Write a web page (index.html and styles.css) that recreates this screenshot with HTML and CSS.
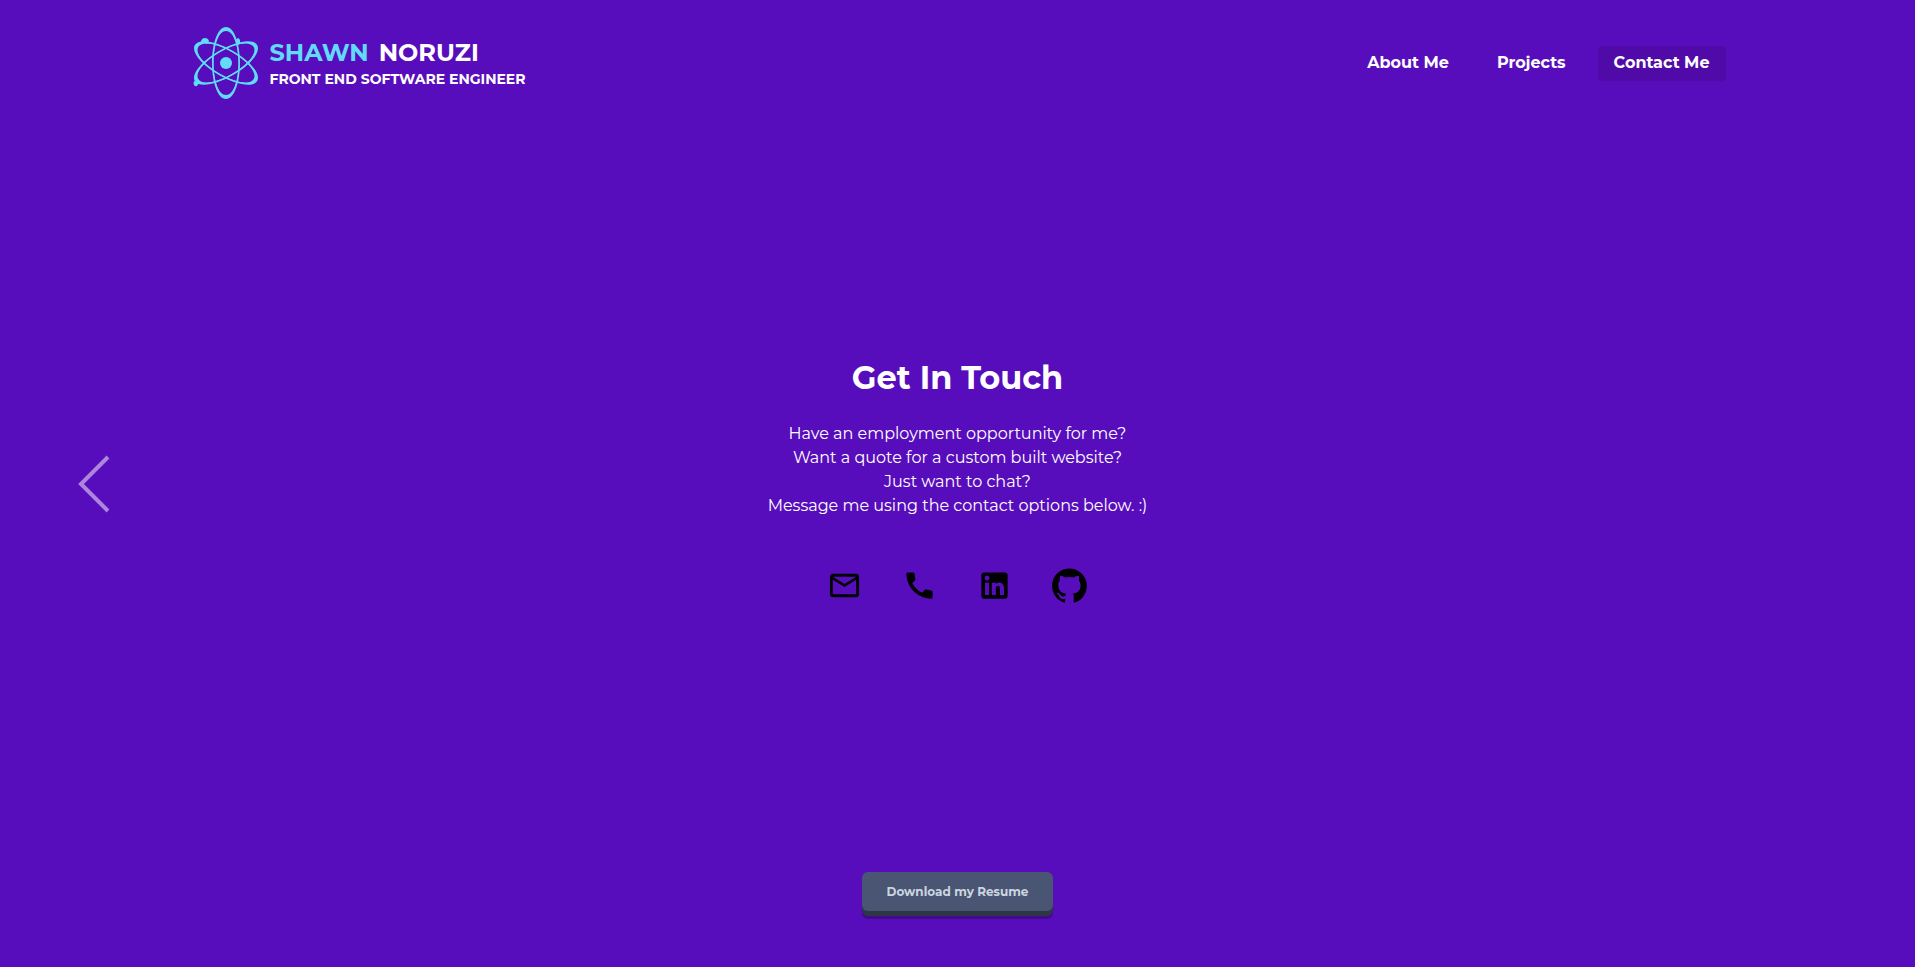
FILE: index.html
```html
<!DOCTYPE html>
<html lang="en">
<head>
<meta charset="utf-8">
<meta name="viewport" content="width=device-width, initial-scale=1">
<title>Shawn Noruzi | Contact</title>
<link rel="stylesheet" href="styles.css">
</head>
<body>
<header class="header">
  <a class="brand" href="#home">
    <svg class="brand-logo" viewBox="0 0 66 72" aria-hidden="true">
      <g fill="#61dafb" fill-rule="evenodd">
        <path d="M33 0C41 0 47 16 47 36S41 72 33 72S19 56 19 36S25 0 33 0ZM33 4C26 4 20.500 17 20.500 36S26 68 33 68S45.500 55 45.500 36S40 4 33 4Z"/>
        <path d="M33 0C41 0 47 16 47 36S41 72 33 72S19 56 19 36S25 0 33 0ZM33 4C26 4 20.500 17 20.500 36S26 68 33 68S45.500 55 45.500 36S40 4 33 4Z" transform="rotate(60 33 36)"/>
        <path d="M33 0C41 0 47 16 47 36S41 72 33 72S19 56 19 36S25 0 33 0ZM33 4C26 4 20.500 17 20.500 36S26 68 33 68S45.500 55 45.500 36S40 4 33 4Z" transform="rotate(-60 33 36)"/>
        <circle cx="33" cy="36" r="6"/>
        <path d="M8 15C8 10 15 10 16 14L14 17Z"/>
        <path d="M43 13C44 10 48 11 47 16L45 18Z"/>
        <path d="M1 54C0 57 1 60 4 59L6 56Z"/>
      </g>
      <g fill="none" stroke="#61dafb">
        <ellipse cx="33" cy="36" rx="13" ry="34"/>
        <ellipse cx="33" cy="36" rx="13" ry="34" transform="rotate(60 33 36)"/>
        <ellipse cx="33" cy="36" rx="13" ry="34" transform="rotate(-60 33 36)"/>
      </g>
    </svg>
    <span class="brand-text">
      <span class="brand-name"><span class="brand-first">SHAWN</span><span>NORUZI</span></span>
      <span class="brand-role">FRONT END SOFTWARE ENGINEER</span>
    </span>
  </a>
  <nav class="nav">
    <a class="nav-link" href="#about">About Me</a>
    <a class="nav-link" href="#projects">Projects</a>
    <a class="nav-link nav-link-active" href="#contact" aria-current="page">Contact Me</a>
  </nav>
</header>
<main class="main">
  <button class="previous" type="button" aria-label="Previous page">
    <svg viewBox="0 0 32 58" aria-hidden="true"><path d="M30 2L3 29L30 56" fill="none" stroke="currentColor" stroke-width="4"/></svg>
  </button>
  <section class="contact">
    <h1 class="title">Get In Touch</h1>
    <p class="message">Have an employment opportunity for me?<br>Want a quote for a custom built website?<br>Just want to chat?<br>Message me using the contact options below. :)</p>
    <div class="links">
      <a href="#email" aria-label="Email"><svg viewBox="0 0 24 24"><path d="M22 6c0-1.100-.9-2-2-2H4c-1.100 0-2 .9-2 2v12c0 1.100.9 2 2 2h16c1.100 0 2-.9 2-2V6zm-2 0l-8 5-8-5h16zm0 12H4V8l8 5 8-5v10z"/></svg></a>
      <a href="#phone" aria-label="Phone"><svg viewBox="0 0 24 24"><path d="M20.010 15.380c-1.230 0-2.420-.2-3.530-.56-.35-.12-.74-.03-1.010.24l-1.570 1.970c-2.830-1.350-5.480-3.900-6.890-6.830l1.950-1.660c.27-.28.35-.67.24-1.020-.37-1.110-.56-2.300-.56-3.530 0-.54-.45-.99-.99-.99H4.190C3.650 3 3 3.240 3 3.990 3 13.280 10.730 21 20.010 21c.71 0 .99-.63.99-1.180v-3.450c0-.54-.45-.99-.99-.99z"/></svg></a>
      <a href="#linkedin" aria-label="LinkedIn"><svg viewBox="0 0 24 24"><path d="M19 3a2 2 0 0 1 2 2v14a2 2 0 0 1-2 2H5a2 2 0 0 1-2-2V5a2 2 0 0 1 2-2h14m-.5 15.500v-5.300a3.260 3.260 0 0 0-3.260-3.260c-.85 0-1.840.52-2.320 1.300v-1.110h-2.790v8.370h2.790v-4.930c0-.77.62-1.400 1.390-1.400a1.400 1.400 0 0 1 1.400 1.400v4.930h2.790M6.880 8.560a1.680 1.680 0 0 0 1.680-1.680c0-.93-.75-1.690-1.680-1.690a1.690 1.690 0 0 0-1.690 1.690c0 .93.76 1.680 1.690 1.680m1.390 9.940v-8.370H5.500v8.370h2.770z"/></svg></a>
      <a href="#github" aria-label="GitHub"><svg viewBox="0 0 24 24"><path d="M12 .3a12 12 0 0 0-3.800 23.380c.6.120.83-.26.830-.57L9 21.070c-3.340.72-4.040-1.610-4.040-1.610-.55-1.390-1.340-1.760-1.340-1.760-1.080-.74.090-.73.090-.73 1.200.09 1.830 1.240 1.830 1.240 1.080 1.830 2.810 1.300 3.500 1 .1-.78.420-1.310.760-1.610-2.670-.3-5.470-1.330-5.470-5.930 0-1.310.470-2.380 1.240-3.220-.14-.3-.54-1.520.1-3.180 0 0 1-.32 3.300 1.230a11.500 11.500 0 0 1 6 0c2.280-1.550 3.290-1.230 3.290-1.230.640 1.660.240 2.880.120 3.180a4.650 4.650 0 0 1 1.230 3.220c0 4.610-2.800 5.630-5.480 5.920.420.360.810 1.100.810 2.220l-.010 3.290c0 .310.200.690.820.570A12 12 0 0 0 12 .3"/></svg></a>
    </div>
  </section>
</main>
<footer class="footer">
  <button class="resume" type="button">Download my Resume</button>
</footer>
</body>
</html>
```
FILE: styles.css
```css
* { box-sizing: border-box; }
body {
  margin: 0;
  min-height: 100vh;
  display: flex;
  flex-direction: column;
  background: #580dbd;
  color: #fff;
  font: 400 16px/24px Montserrat, Inter, sans-serif;
}
a { color: inherit; text-decoration: none; }
svg { display: block; }
.header {
  width: 100%;
  max-width: 1536px;
  height: 126px;
  margin: 0 auto;
  display: flex;
  align-items: center;
  justify-content: space-between;
}
.brand { display: flex; align-items: center; gap: 11px; padding-left: 3px; }
.brand-logo { width: 66px; height: 72px; }
.brand-text { display: flex; flex-direction: column; font-weight: 700; }
.brand-name { display: flex; gap: 10px; font-size: 24px; line-height: 32px; }
.brand-first { color: #61dafb; }
.brand-role { font-size: 14px; line-height: 21px; }
.nav { display: flex; gap: 16px; }
.nav-link { padding: 5px 16px 6px; border-radius: 4px; font-weight: 700; line-height: 24px; }
.nav-link-active { background: #500aa8; }
.main {
  flex: 1;
  display: grid;
  grid-template-columns: 1fr auto 1fr;
  align-items: center;
}
.previous {
  width: 32px;
  margin-left: 78px;
  padding: 0;
  border: 0;
  background: none;
  color: #ab85de;
}
.contact { padding-bottom: 6px; text-align: center; }
.title { margin: 0 0 24px; font-size: 32px; line-height: 40px; font-weight: 700; }
.message { margin: 0; }
.links { display: flex; justify-content: center; gap: 40px; margin-top: 50px; }
.links svg { width: 35px; height: 35px; fill: #000; }
.footer {
  display: flex;
  justify-content: center;
  padding: 31px 0 56px;
}
.resume {
  padding: 0 25px;
  border: 0;
  border-radius: 6px;
  background: #4a5573;
  color: #cbd5e0;
  box-shadow: 0 5px 0 #2d3748, 0 8px 0 #430a8b;
  font: 700 12px/39px Montserrat, Inter, sans-serif;
}
```
